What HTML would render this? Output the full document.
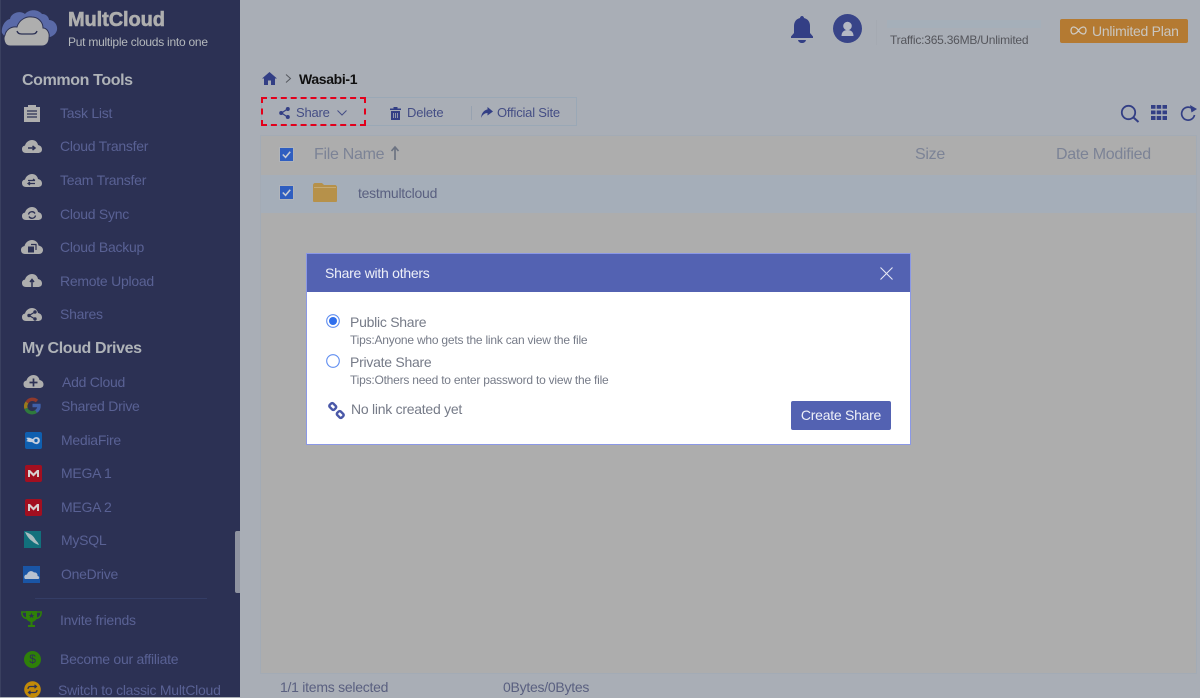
<!DOCTYPE html>
<html>
<head>
<meta charset="utf-8">
<style>
html,body{margin:0;padding:0;width:1200px;height:697px;overflow:hidden;background:#a9aeb6;font-family:"Liberation Sans",sans-serif;letter-spacing:-.26px}
.a{position:absolute;white-space:nowrap}
#side{position:absolute;left:0;top:0;width:240px;height:697px;background:#2c3154;border-left:1px solid #3a4060;box-sizing:border-box}
.s{position:absolute;white-space:nowrap;font-size:14px;line-height:16px;color:#596194}
.h{position:absolute;white-space:nowrap;font-size:16px;font-weight:bold;line-height:18px;color:#afb3b8;letter-spacing:-.38px}
svg{position:absolute;overflow:visible}
.m{color:#5a6080;font-size:14px;line-height:16px}
.g{color:#7c8396;font-size:16px;line-height:18px;letter-spacing:-.3px}
.t{font-size:12px;line-height:14px;letter-spacing:-.22px}
.b{font-size:13px;line-height:16px;color:#454e85;letter-spacing:-.2px}
</style>
</head>
<body>
<div id="side"></div>

<!-- logo -->
<svg style="left:0;top:0" width="60" height="50" viewBox="0 0 60 50">
<path d="M2 33C1 27 5 20 10 19C11 13 20 10 25 14C29 9 38 9 42 14C47 14 49 18 49 20C54 20 58 25 57 30C56 34 53 36 50 37L5 37Z" fill="#5a6aa8"/>
<path d="M10 46C4 46 3 38 5 35C6 30 11 26 17 27C19 20 26 16 32 17C38 17 43 22 43 28C47 28 50 33 49 38C49 43 46 46 42 46Z" fill="#aeaeae" stroke="#2c3154" stroke-width="1"/>
<path d="M17 31C18 34 20 34 23 34H31C34 34 36 34 37 31" fill="none" stroke="#2c3154" stroke-width="1.300"/>
</svg>
<div class="a" style="left:68px;top:9px;font-size:20px;font-weight:bold;line-height:22px;color:#aeaeae;letter-spacing:-.1px;-webkit-text-stroke:.6px #aeaeae">MultCloud</div>
<div class="a t" style="left:68px;top:35px;color:#b4b8bc;letter-spacing:-.25px">Put multiple clouds into one</div>

<div class="h" style="left:22px;top:72px">Common Tools</div>
<div class="h" style="left:22px;top:340px">My Cloud Drives</div>

<!-- sidebar items -->
<div class="s" style="left:60px;top:105px">Task List</div>
<div class="s" style="left:60px;top:138px">Cloud Transfer</div>
<div class="s" style="left:60px;top:172px">Team Transfer</div>
<div class="s" style="left:60px;top:206px">Cloud Sync</div>
<div class="s" style="left:60px;top:239px">Cloud Backup</div>
<div class="s" style="left:60px;top:273px">Remote Upload</div>
<div class="s" style="left:60px;top:306px">Shares</div>
<div class="s" style="left:62px;top:374px">Add Cloud</div>
<div class="s" style="left:61px;top:398px">Shared Drive</div>
<div class="s" style="left:61px;top:432px">MediaFire</div>
<div class="s" style="left:61px;top:465px">MEGA 1</div>
<div class="s" style="left:61px;top:499px">MEGA 2</div>
<div class="s" style="left:61px;top:532px">MySQL</div>
<div class="s" style="left:61px;top:566px">OneDrive</div>
<div class="s" style="left:60px;top:612px">Invite friends</div>
<div class="s" style="left:60px;top:651px">Become our affiliate</div>
<div class="s" style="left:58px;top:682px">Switch to classic MultCloud</div>

<!-- task list icon -->
<svg style="left:24px;top:105px" width="16" height="17" viewBox="0 0 16 17">
<path d="M0 2H4V0H12V2H16V17H0Z" fill="#aeaeae"/>
<path d="M3 6H13M3 9H13M3 12H13" stroke="#2c3154" stroke-width="1.200"/>
</svg>
<!-- cloud icons -->
<svg style="left:22px;top:139px" width="20" height="15" viewBox="0 0 20 15"><path d="M4 14C1 14 0 12 0 10C0 8 1 7 3 6.500C4 3 7 1 10 1C13 1 15.500 3 16 6C18.500 6.500 20 8 20 10.500C20 13 18 14 16 14Z" fill="#aeaeae"/><path d="M6 9H13M10.500 7L13 9L10.500 11" fill="none" stroke="#2c3154" stroke-width="1.500"/></svg>
<svg style="left:22px;top:173px" width="20" height="15" viewBox="0 0 20 15"><path d="M4 14C1 14 0 12 0 10C0 8 1 7 3 6.500C4 3 7 1 10 1C13 1 15.500 3 16 6C18.500 6.500 20 8 20 10.500C20 13 18 14 16 14Z" fill="#aeaeae"/><path d="M6 7.500H13M11 6L13 7.500M13 10.500H6M8 9L6 10.500L8 12" fill="none" stroke="#2c3154" stroke-width="1.200"/></svg>
<svg style="left:22px;top:206px" width="20" height="15" viewBox="0 0 20 15"><path d="M4 14C1 14 0 12 0 10C0 8 1 7 3 6.500C4 3 7 1 10 1C13 1 15.500 3 16 6C18.500 6.500 20 8 20 10.500C20 13 18 14 16 14Z" fill="#aeaeae"/><path d="M6.500 8.500A3.500 3.500 0 0 1 13 7.500M13.500 9.500A3.500 3.500 0 0 1 7 10.500" fill="none" stroke="#2c3154" stroke-width="1.300"/></svg>
<svg style="left:21px;top:239px" width="22" height="16" viewBox="0 0 22 16"><path d="M4 15C1 15 0 13 0 11C0 8.500 1.500 7.500 3.500 7C4.500 3 8 1 11 1C14 1 17 3 17.500 6.500C20 7 22 8.500 22 11C22 13.500 20 15 18 15Z" fill="#aeaeae"/><path d="M7 7.500H13V13.500H7Z" fill="#2c3154"/><path d="M10 5.500H15V11" fill="none" stroke="#2c3154" stroke-width="1.200"/></svg>
<svg style="left:22px;top:273px" width="20" height="15" viewBox="0 0 20 15"><path d="M4 14C1 14 0 12 0 10C0 8 1 7 3 6.500C4 3 7 1 10 1C13 1 15.500 3 16 6C18.500 6.500 20 8 20 10.500C20 13 18 14 16 14Z" fill="#aeaeae"/><path d="M10 14V7M8 9L10 6.500L12 9" fill="none" stroke="#2c3154" stroke-width="1.500"/></svg>
<svg style="left:22px;top:307px" width="20" height="15" viewBox="0 0 20 15"><path d="M4 14C1 14 0 12 0 10C0 8 1 7 3 6.500C4 3 7 1 10 1C13 1 15.500 3 16 6C18.500 6.500 20 8 20 10.500C20 13 18 14 16 14Z" fill="#aeaeae"/><path d="M13 5L7 8.500L13 12" fill="none" stroke="#2c3154" stroke-width="1.200"/><circle cx="13" cy="5" r="1.700" fill="#2c3154"/><circle cx="7" cy="8.500" r="1.700" fill="#2c3154"/><circle cx="13" cy="12" r="1.700" fill="#2c3154"/></svg>
<svg style="left:23px;top:374px" width="21" height="15" viewBox="0 0 20 15"><path d="M4 14C1 14 0 12 0 10C0 8 1 7 3 6.500C4 3 7 1 10 1C13 1 15.500 3 16 6C18.500 6.500 20 8 20 10.500C20 13 18 14 16 14Z" fill="#aeaeae"/><path d="M6 8.500H14M10 4.500V12.500" fill="none" stroke="#2c3154" stroke-width="1.700"/></svg>

<!-- google -->
<svg style="left:24px;top:398px" width="17" height="16" viewBox="0 0 17 16" fill="none" stroke-width="3.400">
<path d="M3 4.500A6.500 6.500 0 0 1 13 3" stroke="#8f3a2c"/>
<path d="M2 10.500A6.500 6.500 0 0 1 3 4.500" stroke="#9a7a1c"/>
<path d="M2 10.500A6.500 6.500 0 0 0 12 13.500" stroke="#2f7a3c"/>
<path d="M12 13.500A6.500 6.500 0 0 0 15 7.500H8.500" stroke="#3f5fa8"/>
</svg>
<!-- mediafire -->
<div class="a" style="left:25px;top:432px;width:17px;height:17px;background:#0f5fb0;border-radius:2px"></div>
<svg style="left:25px;top:432px" width="17" height="17" viewBox="0 0 17 17"><path d="M1 6C4 5 6 6.500 8 7C9 5 12 4.500 14 6C15.500 8 15 11 12.500 12C10 12.500 8.500 11 7 10C5 10.500 3 9.500 1 9C3 8.500 3 7 1 6Z" fill="#c4cedd"/><circle cx="11" cy="8.500" r="1.700" fill="#0f5fb0"/></svg>
<!-- mega -->
<div class="a" style="left:25px;top:465px;width:17px;height:17px;background:#a20f20;border-radius:2px"></div>
<svg style="left:25px;top:465px" width="17" height="17" viewBox="0 0 17 17"><path d="M3 12V5H5L8.500 8.500L12 5H14V12H12V8L8.500 11.500L5 8V12Z" fill="#d6d0d0"/></svg>
<div class="a" style="left:25px;top:499px;width:17px;height:17px;background:#a20f20;border-radius:2px"></div>
<svg style="left:25px;top:499px" width="17" height="17" viewBox="0 0 17 17"><path d="M3 12V5H5L8.500 8.500L12 5H14V12H12V8L8.500 11.500L5 8V12Z" fill="#d6d0d0"/></svg>
<!-- mysql -->
<div class="a" style="left:24px;top:531px;width:17px;height:17px;background:#12707c"></div>
<svg style="left:24px;top:531px" width="17" height="17" viewBox="0 0 17 17"><path d="M1 1C5 2 9 4 11 8C12 10 14 11 15 14C12 13 10 12 8 10C5 8 3 5 1 1Z" fill="#a9bcc0"/></svg>
<!-- onedrive -->
<div class="a" style="left:23px;top:566px;width:17px;height:17px;background:#1a55a5"></div>
<svg style="left:23px;top:566px" width="17" height="17" viewBox="0 0 17 17"><path d="M2 13C0.500 11 1.500 8.500 4 8.500C5 5 9 4 11 6.500C13 6 15 8 14.500 10C16.500 10 17 13 15 13Z" fill="#b8c2d0"/></svg>

<div class="a" style="left:35px;top:598px;width:172px;height:1px;background:#343d66"></div>

<!-- trophy -->
<svg style="left:21px;top:610px" width="21" height="18" viewBox="0 0 21 18"><path d="M5 1H16V7C16 10 13 11.500 11.500 12V15H14V17H7V15H9.500V12C8 11.500 5 10 5 7Z" fill="#2e8009"/><path d="M5 2H0.800C0.800 6 2.500 8 6 8.500M16 2H20.200C20.200 6 18.500 8 15 8.500" fill="none" stroke="#2e8009" stroke-width="1.500"/><path d="M10.500 2.800L11.400 5H13.300L11.800 6.300L12.300 8L10.500 7L8.700 8L9.200 6.300L7.700 5H9.600Z" fill="#2c3154"/></svg>
<!-- affiliate -->
<div class="a" style="left:24px;top:651px;width:17px;height:17px;background:#2e8009;border-radius:50%;text-align:center;font-size:12px;line-height:17px;color:#2c3154">$</div>
<!-- switch -->
<svg style="left:24px;top:681px" width="17" height="17" viewBox="0 0 17 17"><circle cx="8.500" cy="8.500" r="8.300" fill="#c28a08"/><path d="M4 8C4 6 5 5.500 6.500 5.500H12M10.500 3.800L12.500 5.500L10.500 7.200M13 9C13 11 12 11.500 10.500 11.500H5M6.500 9.800L4.500 11.500L6.500 13.200" fill="none" stroke="#2c3154" stroke-width="1.200"/></svg>
<!-- scrollbar -->
<div class="a" style="left:235px;top:531px;width:5px;height:62px;background:#8f93a0;border-radius:2px 0 0 2px"></div>

<!-- top right -->
<svg style="left:790px;top:15px" width="24" height="28" viewBox="0 0 24 28"><path d="M12 1C13 1 14 2 14 3C18 4 20 7 20 11V18L23 21.500V23H1V21.500L4 18V11C4 7 6 4 10 3C10 2 11 1 12 1Z" fill="#333f85"/><path d="M8 25H16C15.500 27 14 28 12 28C10 28 8.500 27 8 25Z" fill="#333f85"/></svg>
<div class="a" style="left:833px;top:14px;width:29px;height:29px;background:#384488;border-radius:50%"></div>
<svg style="left:833px;top:14px" width="29" height="29" viewBox="0 0 29 29"><circle cx="14.500" cy="12" r="4.300" fill="#b4b8c4"/><path d="M8.500 22C8.500 18 11 16 14.500 16C18 16 20.500 18 20.500 22Z" fill="#b4b8c4"/></svg>
<div class="a" style="left:876px;top:20px;width:1px;height:25px;background:#a5aab2"></div>
<div class="a" style="left:887px;top:20px;width:154px;height:8px;background:#a5afb9"></div>
<div class="a t" style="left:890px;top:33px;color:#55565c">Traffic:365.36MB/Unlimited</div>
<div class="a" style="left:1060px;top:19px;width:128px;height:24px;background:#b47a32;border-radius:2px"></div>
<svg style="left:1070px;top:25px" width="17" height="11" viewBox="0 0 17 11"><path d="M8.500 5.500C6.500 2.500 5 2 3.500 2C2 2 1 3.500 1 5.500C1 7.500 2 9 3.500 9C5 9 6.500 8.500 8.500 5.500C10.500 2.500 12 2 13.500 2C15 2 16 3.500 16 5.500C16 7.500 15 9 13.500 9C12 9 10.500 8.500 8.500 5.500Z" fill="none" stroke="#cfcac2" stroke-width="1.300"/></svg>
<div class="a" style="left:1092px;top:23px;font-size:14px;line-height:16px;color:#c9c6c0">Unlimited Plan</div>

<!-- breadcrumb -->
<svg style="left:262px;top:72px" width="15" height="13" viewBox="0 0 15 13"><path d="M7.500 0L15 6.500H13V13H9V8.500H6V13H2V6.500H0Z" fill="#333f85"/></svg>
<svg style="left:285px;top:74px" width="7" height="9" viewBox="0 0 7 9"><path d="M1 .5L5.500 4.500L1 8.500" fill="none" stroke="#55585f" stroke-width="1"/></svg>
<div class="a" style="left:299px;top:71px;font-size:14px;font-weight:bold;line-height:16px;color:#101010;letter-spacing:-.35px">Wasabi-1</div>

<!-- toolbar -->
<div class="a" style="left:261px;top:97px;width:316px;height:29px;box-sizing:border-box;border:1px solid #9aa8b6"></div>
<div class="a" style="left:261px;top:97px;width:105px;height:29px;box-sizing:border-box;border:2px dashed #e3001b"></div>
<svg style="left:279px;top:107px" width="11" height="12" viewBox="0 0 11 12"><path d="M8.500 2L2.500 6L8.500 10" fill="none" stroke="#333f85" stroke-width="1.100"/><circle cx="8.800" cy="2" r="2" fill="#333f85"/><circle cx="2.200" cy="6" r="2" fill="#333f85"/><circle cx="8.800" cy="10" r="2" fill="#333f85"/></svg>
<div class="a b" style="left:296px;top:105px">Share</div>
<svg style="left:337px;top:110px" width="10" height="6" viewBox="0 0 10 6"><path d="M.5 .5L5 5L9.500 .5" fill="none" stroke="#454e85" stroke-width="1"/></svg>
<svg style="left:390px;top:106px" width="11" height="14" viewBox="0 0 11 14"><path d="M0 2.500H3.500V1H7.500V2.500H11V4H0ZM1 5H10V14H1Z" fill="#333f85"/><path d="M3.500 7V12M5.500 7V12M7.500 7V12" stroke="#a9aeb6" stroke-width=".8"/></svg>
<div class="a b" style="left:407px;top:105px">Delete</div>
<div class="a" style="left:471px;top:106px;width:1px;height:14px;background:#97a2b0"></div>
<svg style="left:481px;top:107px" width="12" height="11" viewBox="0 0 12 11"><path d="M6.500 0L12 4.500L6.500 8.500V6C4 6 1.500 7.500 0 11C.5 6 3 3 6.500 2.500Z" fill="#333f85"/></svg>
<div class="a b" style="left:497px;top:105px">Official Site</div>

<!-- right tools -->
<svg style="left:1120px;top:104px" width="20" height="20" viewBox="0 0 20 20"><circle cx="8.500" cy="8.500" r="6.700" fill="none" stroke="#333f85" stroke-width="1.800"/><path d="M13.500 13.500L18.500 18" stroke="#333f85" stroke-width="2"/></svg>
<svg style="left:1151px;top:105px" width="16" height="15" viewBox="0 0 16 15" fill="#333f85"><path d="M0 0H4.500V3.800H0ZM5.700 0H10.200V3.800H5.700ZM11.500 0H16V3.800H11.500ZM0 5.500H4.500V9.300H0ZM5.700 5.500H10.200V9.300H5.700ZM11.500 5.500H16V9.300H11.500ZM0 11H4.500V15H0ZM5.700 11H10.200V15H5.700ZM11.500 11H16V15H11.500Z"/></svg>
<svg style="left:1180px;top:105px" width="18" height="16" viewBox="0 0 18 16"><path d="M14.500 9.500A6.500 6.500 0 1 1 11 2.300" fill="none" stroke="#333f85" stroke-width="1.700" transform="translate(0,.5)"/><path d="M10 0L17 4L11.500 7.500Z" fill="#333f85"/></svg>

<!-- table -->
<div class="a" style="left:260px;top:135px;width:937px;height:539px;box-sizing:border-box;background:#adadad;border:1px solid #a3abb5"></div>
<div class="a" style="left:261px;top:175px;width:935px;height:38px;background:#a5aeb9"></div>
<div class="a" style="left:279px;top:147px;width:15px;height:15px;box-sizing:border-box;background:#2f5ec0;border:1px solid #b0b4ba"></div>
<svg style="left:280px;top:148px" width="13" height="13" viewBox="0 0 14 14"><path d="M3 7L6 10L11 4" fill="none" stroke="#c8ccd4" stroke-width="1.700"/></svg>
<div class="a" style="left:279px;top:185px;width:15px;height:15px;box-sizing:border-box;background:#2f5ec0;border:1px solid #b0b4ba"></div>
<svg style="left:280px;top:186px" width="13" height="13" viewBox="0 0 14 14"><path d="M3 7L6 10L11 4" fill="none" stroke="#c8ccd4" stroke-width="1.700"/></svg>
<div class="a g" style="left:314px;top:146px">File Name</div>
<svg style="left:390px;top:146px" width="10" height="14" viewBox="0 0 10 14"><path d="M5 14V2M1.500 5L5 1L8.500 5" fill="none" stroke="#6c7382" stroke-width="1.700"/></svg>
<div class="a g" style="left:915px;top:146px">Size</div>
<div class="a g" style="left:1056px;top:146px">Date Modified</div>
<svg style="left:313px;top:183px" width="24" height="19" viewBox="0 0 24 19"><path d="M0 2C0 1 1 0 2 0H9L11 2H22C23 2 24 3 24 4V18C24 19 23 19 22 19H2C1 19 0 19 0 18Z" fill="#b6914a"/><path d="M1 4.500H23" stroke="#c6aa72" stroke-width="1"/></svg>
<div class="a m" style="left:358px;top:185px">testmultcloud</div>

<div class="a m" style="left:280px;top:679px">1/1 items selected</div>
<div class="a m" style="left:503px;top:679px">0Bytes/0Bytes</div>

<!-- modal -->
<div class="a" style="left:306px;top:253px;width:605px;height:192px;box-sizing:border-box;background:#fff;border:1px solid #8b98e6"></div>
<div class="a" style="left:307px;top:254px;width:603px;height:38px;background:#5362b2"></div>
<div class="a" style="left:325px;top:265px;font-size:14px;line-height:16px;color:#eef0f8">Share with others</div>
<svg style="left:880px;top:267px" width="13" height="13" viewBox="0 0 13 13"><path d="M.5 .5L12.500 12.500M12.500 .5L.5 12.500" stroke="#e6e8f4" stroke-width="1.100"/></svg>

<svg style="left:326px;top:314px" width="14" height="14" viewBox="0 0 14 14"><circle cx="7" cy="7" r="6.300" fill="#fff" stroke="#5f8df0" stroke-width="1.100"/><circle cx="7" cy="7" r="4" fill="#2f6fec"/></svg>
<div class="a" style="left:350px;top:314px;font-size:14px;line-height:16px;color:#767b88">Public Share</div>
<div class="a t" style="left:350px;top:333px;color:#767b88">Tips:Anyone who gets the link can view the file</div>
<svg style="left:326px;top:354px" width="14" height="14" viewBox="0 0 14 14"><circle cx="7" cy="7" r="6.300" fill="#fff" stroke="#5f8df0" stroke-width="1.100"/></svg>
<div class="a" style="left:350px;top:354px;font-size:14px;line-height:16px;color:#767b88">Private Share</div>
<div class="a t" style="left:350px;top:373px;color:#767b88">Tips:Others need to enter password to view the file</div>
<svg style="left:328px;top:402px" width="17" height="17" viewBox="0 0 17 17" fill="none" stroke="#4a58a8" stroke-width="2.400"><rect x="1.500" y="2" width="6.500" height="5" rx="1.500" transform="rotate(45 4.750 4.500)"/><rect x="9" y="10" width="6.500" height="5" rx="1.500" transform="rotate(45 12.250 12.500)"/></svg>
<div class="a" style="left:351px;top:401px;font-size:14px;line-height:16px;color:#767b88">No link created yet</div>
<div class="a" style="left:791px;top:401px;width:100px;height:29px;background:#5362b2;border-radius:2px;text-align:center;font-size:14px;line-height:29px;color:#eef0f8">Create Share</div>
</body>
</html>
